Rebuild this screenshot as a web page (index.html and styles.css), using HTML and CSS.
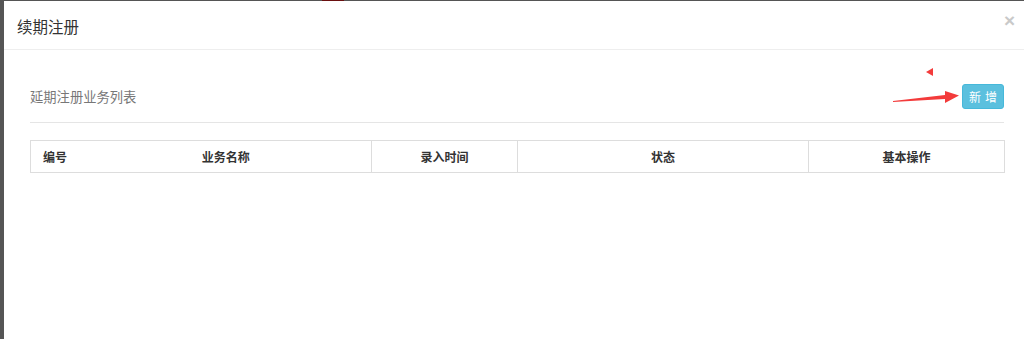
FILE: index.html
```html
<!DOCTYPE html>
<html lang="zh-CN">
<head>
<meta charset="utf-8">
<title>续期注册</title>
<link rel="stylesheet" href="styles.css">
</head>
<body>
<div class="backdrop-mark"></div>
<div class="modal">
  <div class="modal-header">
    <h4 class="modal-title">续期注册</h4>
    <span class="close">×</span>
  </div>
  <div class="modal-body">
    <div class="toolbar">
      <span class="subtitle">延期注册业务列表</span>
      <button class="btn-add">新增</button>
    </div>
    <table class="grid">
      <colgroup>
        <col class="c1"><col class="c2"><col class="c3"><col class="c4"><col class="c5">
      </colgroup>
      <thead>
        <tr>
          <th class="left">编号</th>
          <th class="noleft">业务名称</th>
          <th>录入时间</th>
          <th>状态</th>
          <th>基本操作</th>
        </tr>
      </thead>
    </table>
  </div>
  <svg class="annot" width="80" height="45" viewBox="0 0 80 45">
    <polygon points="1,4 8,0 8,8" fill="#f33b3b"/>
    <polygon points="-32,33 20,27 20,23 34,27.5 20,35 20,31 -32,34" fill="#f33b3b"/>
  </svg>
</div>
</body>
</html>
```

FILE: styles.css
```css
html, body {
  margin: 0;
  padding: 0;
}
body {
  background: #555555;
  width: 1024px;
  height: 339px;
  overflow: hidden;
  padding: 1px 0 0 4px;
  box-sizing: border-box;
  font-family: "Noto Sans CJK SC", "Liberation Sans", sans-serif;
  position: relative;
}
.backdrop-mark {
  position: absolute;
  left: 322px;
  top: 0;
  width: 22px;
  height: 1px;
  background: #6a1010;
}
.modal {
  position: relative;
  width: 1026px;
  height: 338px;
  background: #ffffff;
}
.modal-header {
  height: 48px;
  border-bottom: 1px solid #eeeeee;
  display: flex;
  align-items: center;
  justify-content: space-between;
  padding: 0 15px 0 13px;
}
.modal-title {
  margin: 0;
  font-size: 15.5px;
  font-weight: normal;
  color: #333333;
  line-height: 20px;
  margin-top: 1px;
}
.close {
  font-family: "Liberation Sans", sans-serif;
  font-size: 19px;
  font-weight: bold;
  color: #c9c9c9;
  line-height: 1;
  margin-top: -10px;
}
.modal-body {
  padding: 34px 26px 0 26px;
}
.toolbar {
  display: flex;
  align-items: center;
  justify-content: space-between;
  padding-bottom: 13px;
  border-bottom: 1px solid #e5e5e5;
  width: 974px;
}
.subtitle {
  font-size: 13.3px;
  color: #777777;
  line-height: 20px;
  margin-top: 1px;
}
.btn-add {
  width: 42px;
  height: 25px;
  border: 1px solid #46b8da;
  background: #5bc0de;
  color: #ffffff;
  border-radius: 3px;
  font-family: "Noto Sans CJK SC", sans-serif;
  font-size: 12px;
  letter-spacing: 4px;
  padding: 0 0 0 4px;
  line-height: 23px;
}
.grid {
  margin-top: 17px;
  width: 974px;
  border-collapse: collapse;
  table-layout: fixed;
}
.c1 { width: 50px; }
.c2 { width: 291px; }
.c3 { width: 146px; }
.c4 { width: 291px; }
.c5 { width: 196px; }
.grid th {
  border: 1px solid #dddddd;
  height: 31px;
  padding: 0;
  font-size: 12px;
  font-weight: bold;
  color: #333333;
  text-align: center;
  line-height: 16px;
}
.grid th.left {
  text-align: left;
  padding-left: 12px;
  border-right: none;
}
.grid th.noleft {
  border-left: none;
}
.annot {
  position: absolute;
  left: 921px;
  top: 67px;
  overflow: visible;
}
```
